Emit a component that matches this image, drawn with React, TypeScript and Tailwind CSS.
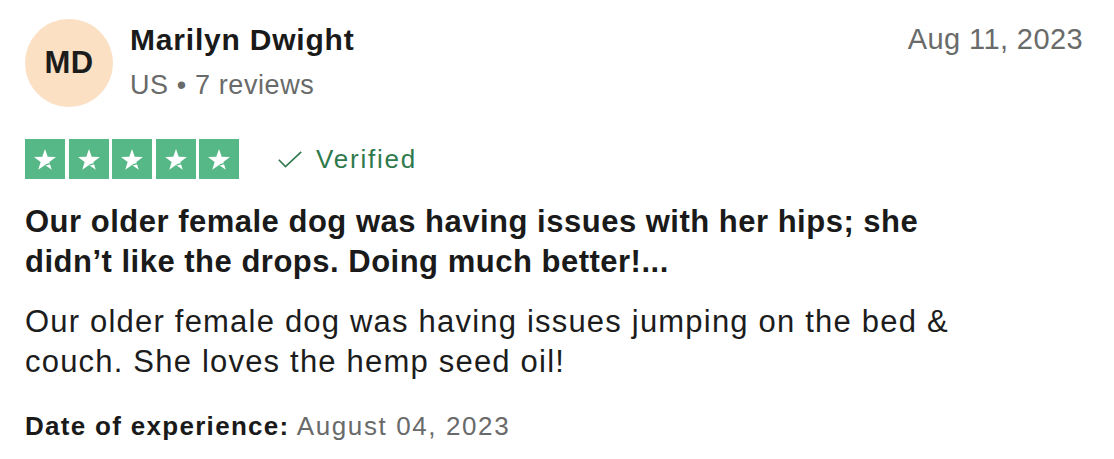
import React from 'react';

const STAR_POINTS =
  '20,10 22.7,17.78 30.94,17.95 24.37,22.92 26.76,30.8 20,26.1 13.24,30.8 15.63,22.92 9.06,17.95 17.3,17.78';

function StarBox() {
  return (
    <div className="w-[40px] h-[40px] bg-[#55b886] flex items-center justify-center">
      <svg width="40" height="40" viewBox="0 0 40 40" aria-hidden="true">
        <polygon points={STAR_POINTS} fill="#fff" />
        {/* little notch on the lower right leg */}
        <line x1="20.6" y1="25.9" x2="25.4" y2="24.6" stroke="#55b886" strokeWidth="1.1" />
      </svg>
    </div>
  );
}

export default function App() {
  return (
    <div className="min-h-screen bg-white font-['Liberation_Sans',Arial,sans-serif] text-[#1a1a1a] pl-[25px] pr-[31px] pt-[19px]">
      {/* Header: avatar, name, meta, date */}
      <div className="flex items-start justify-between">
        <div className="flex items-start gap-[17px]">
          <div className="w-[88px] h-[88px] rounded-full bg-[#fbe0c4] flex items-center justify-center">
            <span className="text-[31px] font-bold tracking-[0.3px] text-[#1c1c1c]">MD</span>
          </div>
          <div className="flex flex-col mt-[3px]">
            <span className="text-[30px] leading-[36px] font-bold tracking-[0.8px]">Marilyn Dwight</span>
            <span className="mt-[9px] text-[27px] leading-[36px] tracking-[0.6px] text-[#696a6a]">
              US • 7 reviews
            </span>
          </div>
        </div>
        <span className="mt-[2px] text-[29px] leading-[36px] tracking-[0.4px] text-[#696a6a]">
          Aug 11, 2023
        </span>
      </div>

      {/* Rating row */}
      <div className="mt-[32px] flex items-center">
        <div className="flex gap-[3.5px]">
          <StarBox />
          <StarBox />
          <StarBox />
          <StarBox />
          <StarBox />
        </div>
        <div className="ml-[39px] flex items-center gap-[14px] text-[#2f7a4d]">
          <svg width="24" height="17" viewBox="0 0 24 17" fill="none" aria-hidden="true">
            <polyline points="0.8,8.8 7.5,15.6 23.2,0.8" stroke="currentColor" strokeWidth="1.6" />
          </svg>
          <span className="text-[26px] leading-[40px] tracking-[1.8px]">Verified</span>
        </div>
      </div>

      {/* Review */}
      <div className="max-w-[960px]">
        <h2 className="mt-[23px] text-[31px] leading-[40px] font-bold tracking-[0.5px]">
          Our older female dog was having issues with her hips; she didn’t like the drops. Doing much better!...
        </h2>
        <p className="mt-[20px] text-[31px] leading-[40px] tracking-[1.2px] text-[#1c1c1c]">
          Our older female dog was having issues jumping on the bed &amp; couch. She loves the hemp seed oil!
        </p>
      </div>

      <p className="mt-[28px] text-[26px] leading-[32px]">
        <span className="font-bold tracking-[1.3px]">Date of experience:</span>{' '}
        <span className="tracking-[1.6px] text-[#696a6a]">August 04, 2023</span>
      </p>
    </div>
  );
}
